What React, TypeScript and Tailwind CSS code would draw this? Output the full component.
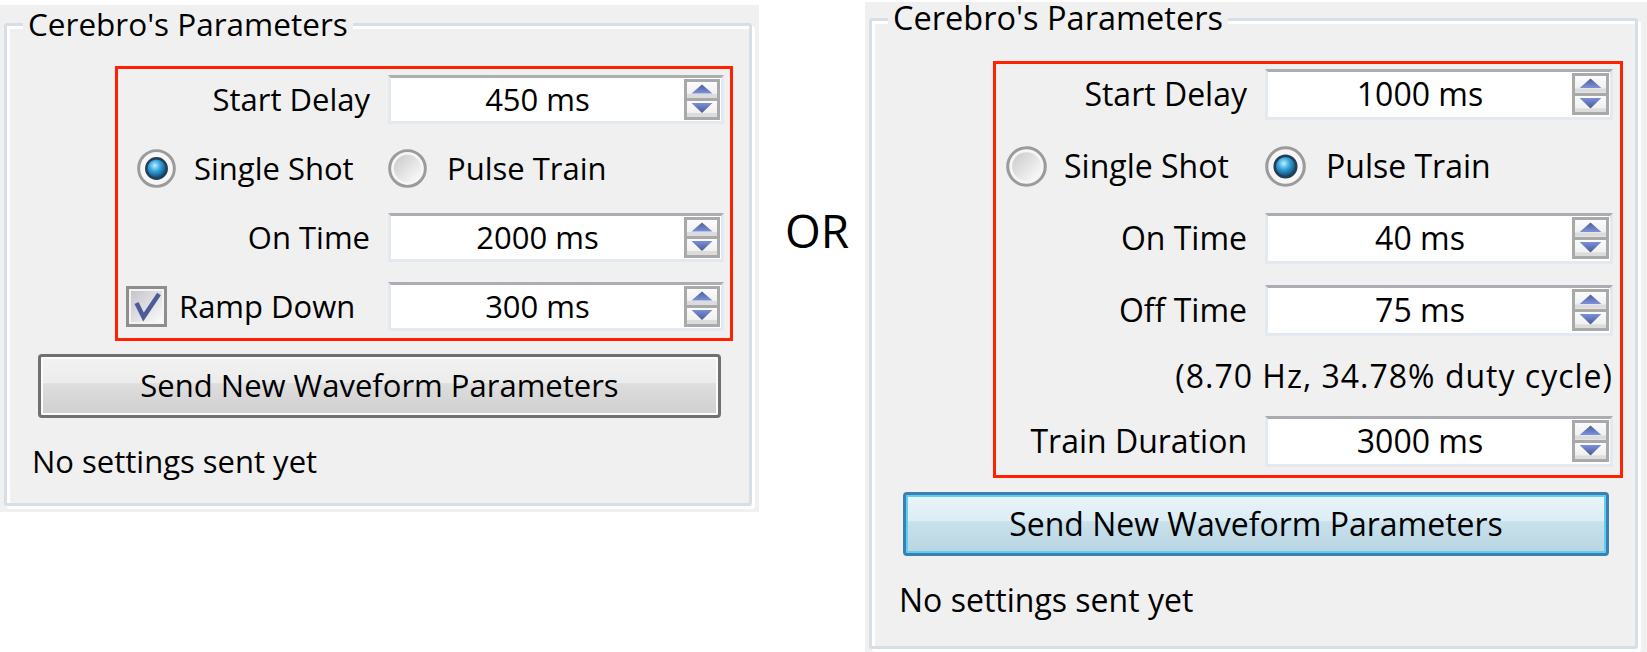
import React, { useId } from "react"

type Size = {
    text: string
    row: string
    labelCol: string
    spin: string
    spinBtn: string
    radio: number
}

const L: Size = {
    text: "text-[31px]",
    row: "h-[49px]",
    labelCol: "w-[246px]",
    spin: "w-[336px]",
    spinBtn: "h-[41px] w-[36px]",
    radio: 39,
}

const R: Size = {
    text: "text-[32px]",
    row: "h-[51px]",
    labelCol: "w-[245px]",
    spin: "w-[348px]",
    spinBtn: "h-[42px] w-[37px]",
    radio: 41,
}

const useSvgId = () => useId().replace(/[^a-zA-Z0-9]/g, "")

const Arrow = ({ up }: { up: boolean }) => {
    const id = useSvgId()
    return (
        <svg width="100%" height="100%" viewBox="0 0 30 16" preserveAspectRatio="none">
            <defs>
                <linearGradient id={id} x1="0" y1="0" x2="0" y2="1">
                    <stop offset="0" stopColor={up ? "#4f5d97" : "#7a8fdb"} />
                    <stop offset="1" stopColor={up ? "#7c91dc" : "#4c5a93"} />
                </linearGradient>
            </defs>
            <rect x="0" y="12" width="30" height="4" fill="#dcdcdc" />
            {up ? (
                <polygon points="4.5,11.5 15,2.5 25.5,11.5" fill={`url(#${id})`} />
            ) : (
                <polygon points="4.5,2 25.5,2 15,12" fill={`url(#${id})`} />
            )}
        </svg>
    )
}

const SpinBox = ({ value, s }: { value: string; s: Size }) => (
    <div className={`flex h-full items-center border-[3px] border-[#e3e9ef] border-t-[#abadb3] bg-white ${s.spin}`}>
        <div className="flex flex-1 justify-center">{value}</div>
        <div className={`mr-[1px] flex flex-col border-[3px] border-[#a9a9a9] bg-[#a9a9a9] ${s.spinBtn}`}>
            <div className="flex-1 bg-[linear-gradient(#fbfbfb,#ededed)]">
                <Arrow up />
            </div>
            <div className="mt-[3px] flex-1 bg-[linear-gradient(#fbfbfb,#ededed)]">
                <Arrow up={false} />
            </div>
        </div>
    </div>
)

const Field = ({ label, value, s }: { label: string; value: string; s: Size }) => (
    <div className={`flex items-center gap-[18px] ${s.row}`}>
        <div className={`text-right ${s.labelCol}`}>{label}</div>
        <SpinBox value={value} s={s} />
    </div>
)

const Radio = ({ checked, size }: { checked?: boolean; size: number }) => {
    const id = useSvgId()
    return (
        <svg width={size} height={size} viewBox="0 0 40 40" className="shrink-0">
            <defs>
                <linearGradient id={id + "u"} x1="0" y1="0" x2="1" y2="1">
                    <stop offset="0" stopColor="#c9c9c9" />
                    <stop offset="1" stopColor="#fdfdfd" />
                </linearGradient>
                <radialGradient id={id + "c"} cx="42%" cy="36%" r="62%">
                    <stop offset="0" stopColor="#b8f2ff" />
                    <stop offset="0.45" stopColor="#36a2da" />
                    <stop offset="1" stopColor="#0e4670" />
                </radialGradient>
            </defs>
            <circle cx="20" cy="20" r="18.3" fill="#f6f6f6" stroke="#9b9b9b" strokeWidth="3" />
            {checked ? (
                <circle cx="20" cy="20" r="10.5" fill={`url(#${id}c)`} stroke="#223f58" strokeWidth="2.5" />
            ) : (
                <circle cx="20" cy="20" r="14" fill={`url(#${id}u)`} />
            )}
        </svg>
    )
}

const CheckBox = () => {
    const id = useSvgId()
    return (
        <svg width="41" height="41" viewBox="0 0 41 41" className="shrink-0">
            <defs>
                <linearGradient id={id} x1="0" y1="0" x2="1" y2="1">
                    <stop offset="0" stopColor="#c4c4cb" />
                    <stop offset="1" stopColor="#fbfbfb" />
                </linearGradient>
            </defs>
            <rect x="1.5" y="1.5" width="38" height="38" fill="#f4f4f4" stroke="#8e8e8e" strokeWidth="3" />
            <rect x="5" y="5" width="31" height="31" fill={`url(#${id})`} />
            <polyline points="10.5,17 17.5,31 33,8" fill="none" stroke="#4d5b99" strokeWidth="4.5" />
        </svg>
    )
}

const RadioItem = ({ label, checked, size, gap }: { label: string; checked?: boolean; size: number; gap: string }) => (
    <div className={`flex items-center ${gap}`}>
        <Radio checked={checked} size={size} />
        <span>{label}</span>
    </div>
)

const groupBox =
    "h-full rounded-[3px] border-[3px] border-[#d5dfe5] leading-none shadow-[inset_3px_3px_0_#fff,3px_3px_0_#fff]"

const LeftPanel = () => (
    <div className="mt-[5px] h-[507px] w-[759px] shrink-0 bg-[#f0f0f0] pb-[6px] pl-[4px] pr-[7px] pt-[18px]">
        <div className={`${groupBox} ${L.text}`}>
            <div className="-mt-[18px] ml-[16px] w-fit bg-[#f0f0f0] px-[5px] text-[31.5px]">Cerebro's Parameters</div>
            <div className="ml-[108px] mt-[26px] flex w-[618px] flex-col gap-[20px] border-[3px] border-[#ff2200] pb-[7px] pl-[6px] pr-[6px] pt-[6px]">
                <Field label="Start Delay" value="450 ms" s={L} />
                <div className={`flex items-center gap-[18px] ${L.row}`}>
                    <div className={`flex pl-[13px] ${L.labelCol}`}>
                        <RadioItem checked label="Single Shot" size={L.radio} gap="gap-[18px]" />
                    </div>
                    <RadioItem label="Pulse Train" size={L.radio} gap="gap-[20px]" />
                </div>
                <Field label="On Time" value="2000 ms" s={L} />
                <div className={`flex items-center gap-[18px] ${L.row}`}>
                    <div className={`flex items-center gap-[12px] pl-[2px] ${L.labelCol}`}>
                        <CheckBox />
                        <span>Ramp Down</span>
                    </div>
                    <SpinBox value="300 ms" s={L} />
                </div>
            </div>
            <button className="ml-[31px] mt-[13px] flex h-[64px] w-[683px] items-center justify-center rounded-[4px] border-[3px] border-[#707070] bg-[linear-gradient(#f2f2f2_0%,#ececec_44%,#dedede_46%,#cfcfcf_100%)] shadow-[inset_0_0_0_2px_#fbfbfb]">
                Send New Waveform Parameters
            </button>
            <div className="ml-[25px] mt-[28px]">No settings sent yet</div>
        </div>
    </div>
)

const RightPanel = () => (
    <div className="mt-[2px] h-[650px] w-[782px] shrink-0 bg-[#f0f0f0] pb-[3px] pl-[4px] pr-[9px] pt-[16px]">
        <div className={`${groupBox} ${R.text}`}>
            <div className="-mt-[19px] ml-[16px] w-fit bg-[#f0f0f0] px-[5px] text-[32.5px]">Cerebro's Parameters</div>
            <div className="ml-[121px] mt-[26px] flex w-[630px] flex-col gap-[21px] border-[3px] border-[#ff2200] pb-[8px] pl-[6px] pr-[7px] pt-[5px]">
                <Field label="Start Delay" value="1000 ms" s={R} />
                <div className={`flex items-center gap-[18px] ${R.row}`}>
                    <div className={`flex pl-[4px] ${R.labelCol}`}>
                        <RadioItem label="Single Shot" size={R.radio} gap="gap-[17px]" />
                    </div>
                    <RadioItem checked label="Pulse Train" size={R.radio} gap="gap-[20px]" />
                </div>
                <Field label="On Time" value="40 ms" s={R} />
                <Field label="Off Time" value="75 ms" s={R} />
                <div className="flex h-[38px] items-center justify-end tracking-[1px]">(8.70 Hz, 34.78% duty cycle)</div>
                <Field label="Train Duration" value="3000 ms" s={R} />
            </div>
            <button className="ml-[31px] mt-[14px] flex h-[64px] w-[706px] items-center justify-center rounded-[4px] border-[3px] border-[#3c7fb1] bg-[linear-gradient(#eaf5fa_0%,#dcedf5_44%,#c8e1ec_46%,#b9d5e2_100%)] shadow-[inset_0_0_0_2px_#62cdf3]">
                Send New Waveform Parameters
            </button>
            <div className="ml-[27px] mt-[28px]">No settings sent yet</div>
        </div>
    </div>
)

export default function App() {
    return (
        <div className="flex h-[652px] w-[1647px] items-start overflow-hidden bg-white font-['Open_Sans',sans-serif] text-black">
            <LeftPanel />
            <div className="h-full w-[106px] shrink-0 pl-[26px] pt-[207px] text-[46px] leading-none">OR</div>
            <RightPanel />
        </div>
    )
}
